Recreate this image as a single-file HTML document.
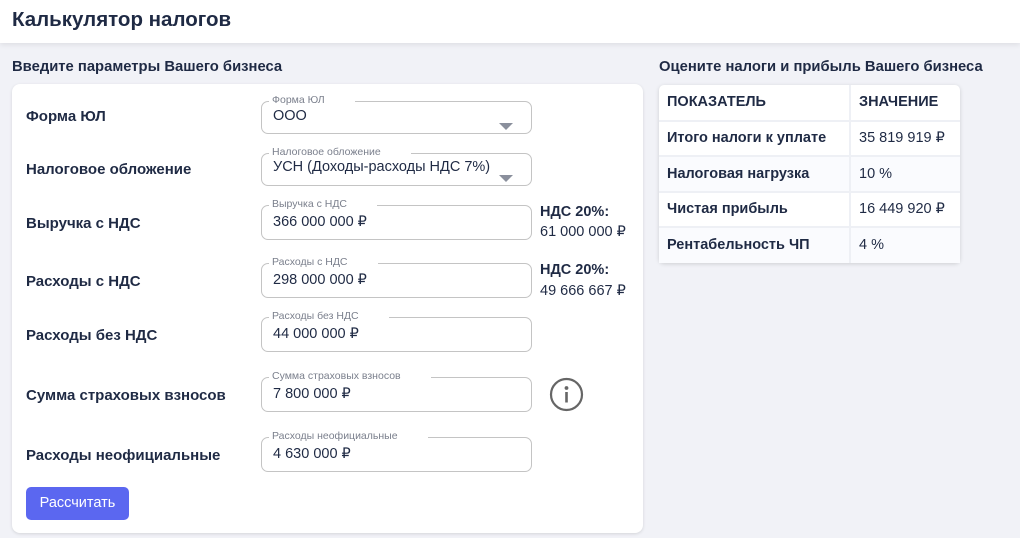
<!DOCTYPE html>
<html><head><meta charset="utf-8"><style>
*{box-sizing:border-box;margin:0;padding:0}
body{width:1020px;height:538px;overflow:hidden;background:#f1f2f7;font-family:"Liberation Sans",sans-serif;color:#1f2a44;position:relative}
.hdr{position:absolute;left:0;top:0;width:1020px;height:43px;background:#fff;box-shadow:0 2px 5px rgba(0,0,0,.08)}
.hdr h1{position:absolute;left:12px;top:8px;font-size:20.5px;font-weight:bold;color:#1f2a44}
.t{position:absolute;font-weight:bold;font-size:14.8px}
.card{position:absolute;left:12px;top:84px;width:631px;height:449px;background:#fff;border-radius:8px;box-shadow:0 1px 3px rgba(0,0,0,.12)}
.lab{position:absolute;left:26px;font-size:15px;font-weight:bold}
.in{position:absolute;left:261px;width:271px;border:1px solid #c4c4c4;border-radius:7px}
.in .l{position:absolute;left:7px;top:-8px;background:#fff;padding:0 30px 0 3px;font-size:10.5px;color:#7a7f8c;line-height:12px}
.in .v{position:absolute;left:11px;font-size:14.5px;color:#1f2a44}
.arr{position:absolute;right:18px;width:0;height:0;border-left:7px solid transparent;border-right:7px solid transparent;border-top:7px solid #8a8f9c}
.nds{position:absolute;left:540px;font-size:14.5px}
.btn{position:absolute;left:26px;top:487px;width:103px;height:33px;background:#5b67f0;border-radius:5px;color:#fff;font-size:14.5px;text-align:center;line-height:32px}
table{position:absolute;left:659px;top:85px;width:301px;border-collapse:collapse;background:#fff;box-shadow:0 1px 4px rgba(0,0,0,.15);border-radius:5px;font-size:14.5px;table-layout:fixed}
td{height:35.5px;padding:0 8px;border-bottom:2px solid #eef0f5;white-space:nowrap}
td:first-child{border-right:2px solid #eef0f5;width:191px;font-weight:bold}
tr.h td{font-weight:bold}
tr:nth-child(odd):not(.h) td{background:#fafbfe}
</style></head><body>
<div class="hdr"><h1>Калькулятор налогов</h1></div>
<div class="t" style="left:12px;top:59px">Введите параметры Вашего бизнеса</div>
<div class="t" style="left:659px;top:59px">Оцените налоги и прибыль Вашего бизнеса</div>
<div class="card"></div>

<div class="lab" style="top:108px">Форма ЮЛ</div>
<div class="in" style="top:101px;height:33px"><span class="l">Форма ЮЛ</span><span class="v" style="top:6px">ООО</span><span class="arr" style="top:21px"></span></div>

<div class="lab" style="top:161px">Налоговое обложение</div>
<div class="in" style="top:153px;height:33px"><span class="l">Налоговое обложение</span><span class="v" style="top:5px">УСН (Доходы-расходы НДС 7%)</span><span class="arr" style="top:21px"></span></div>

<div class="lab" style="top:215px">Выручка с НДС</div>
<div class="in" style="top:205px;height:35px"><span class="l">Выручка с НДС</span><span class="v" style="top:8px">366 000 000 ₽</span></div>
<div class="nds" style="top:204px;font-weight:bold">НДС 20%:</div>
<div class="nds" style="top:224px">61 000 000 ₽</div>

<div class="lab" style="top:273px">Расходы с НДС</div>
<div class="in" style="top:263px;height:35px"><span class="l">Расходы с НДС</span><span class="v" style="top:8px">298 000 000 ₽</span></div>
<div class="nds" style="top:262px;font-weight:bold">НДС 20%:</div>
<div class="nds" style="top:283px">49 666 667 ₽</div>

<div class="lab" style="top:327px">Расходы без НДС</div>
<div class="in" style="top:317px;height:35px"><span class="l">Расходы без НДС</span><span class="v" style="top:8px">44 000 000 ₽</span></div>

<div class="lab" style="top:387px">Сумма страховых взносов</div>
<div class="in" style="top:377px;height:35px"><span class="l">Сумма страховых взносов</span><span class="v" style="top:8px">7 800 000 ₽</span></div>
<svg style="position:absolute;left:549px;top:377px" width="35" height="35" viewBox="0 0 35 35"><circle cx="17.5" cy="17.5" r="15.5" fill="none" stroke="#666" stroke-width="2.2"/><circle cx="17.5" cy="11" r="1.9" fill="#666"/><rect x="16.2" y="15" width="2.6" height="10.5" fill="#666"/></svg>

<div class="lab" style="top:447px">Расходы неофициальные</div>
<div class="in" style="top:437px;height:35px"><span class="l">Расходы неофициальные</span><span class="v" style="top:8px">4 630 000 ₽</span></div>

<div class="btn">Рассчитать</div>

<table>
<tr class="h"><td>ПОКАЗАТЕЛЬ</td><td>ЗНАЧЕНИЕ</td></tr>
<tr><td>Итого налоги к уплате</td><td>35 819 919 ₽</td></tr>
<tr><td>Налоговая нагрузка</td><td>10 %</td></tr>
<tr><td>Чистая прибыль</td><td>16 449 920 ₽</td></tr>
<tr><td style="border-bottom:none">Рентабельность ЧП</td><td style="border-bottom:none">4 %</td></tr>
</table>
</body></html>
